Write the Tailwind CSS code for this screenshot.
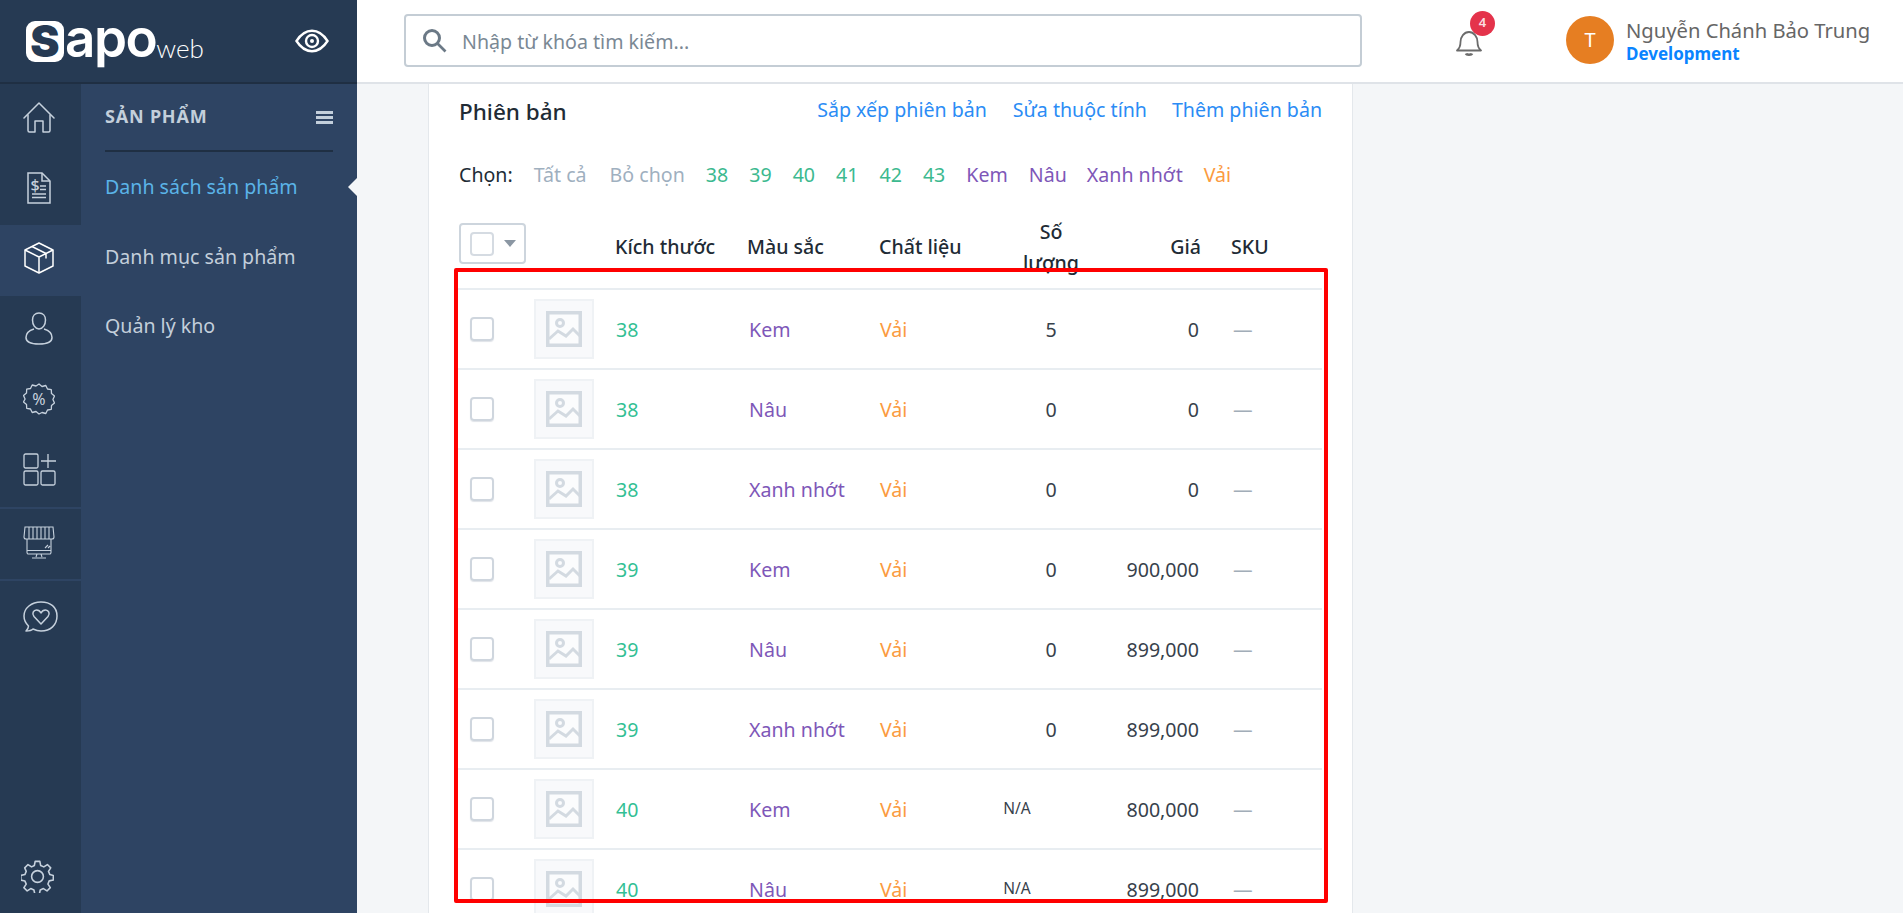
<!DOCTYPE html>
<html lang="vi">
  <head>
    <meta charset="UTF-8" />
    <title>Sapo web - Phiên bản</title>
    <script src="https://cdn.jsdelivr.net/npm/@tailwindcss/browser@4"></script>
  </head>
  <body class="h-screen overflow-hidden flex font-['Noto_Sans',sans-serif] text-[19.6px] text-[#212b35]">
    <!-- Left column -->
    <aside class="w-[357px] shrink-0 flex flex-col bg-[#2e4463]">
      <div class="h-[84px] shrink-0 bg-[#263a53] border-b-2 border-[#1f2f43] flex items-center pl-[26px] pr-[28px]">
        <div class="flex items-center h-[48px]">
          <span class="w-[38px] h-[41px] rounded-[9px] bg-white text-[#263a53] flex items-center justify-center font-['Inter',sans-serif] font-black text-[44px] leading-none">S</span>
          <span class="font-['Inter',sans-serif] font-semibold text-[53px] leading-none tracking-[-1.5px] text-white ml-[1px] -mt-[6px]">apo</span>
          <span class="font-['Lato',sans-serif] font-light text-[26px] leading-none text-white mt-[14px]">web</span>
        </div>
        <svg class="ml-auto" width="34" height="24" viewBox="0 0 34 24" fill="none" stroke="#fff" stroke-width="2.4">
          <path d="M1.5 12C6 5 11 1.8 17 1.8S28 5 32.5 12C28 19 23 22.2 17 22.2S6 19 1.5 12Z" />
          <circle cx="17" cy="12" r="6" />
          <circle cx="17" cy="12" r="2" fill="#fff" stroke="none" />
        </svg>
      </div>

      <div class="flex-1 flex min-h-0">
        <!-- Icon rail -->
        <nav class="w-[81px] shrink-0 bg-[#263a53] flex flex-col text-[#c6d1dd]">
          <a class="h-[70.5px] flex items-center justify-center pb-1 pr-[3px]">
            <svg width="32" height="31" viewBox="0 0 32 31" fill="none" stroke="currentColor" stroke-width="1.5" stroke-linejoin="round" stroke-linecap="round">
              <path d="M1 16 16 1l15 15" /><path d="M5 13v15.500a1.500 1.500 0 0 0 1.500 1.500H12V19h8v11h5.500a1.500 1.500 0 0 0 1.500-1.500V13" />
            </svg>
          </a>
          <a class="h-[70.5px] flex items-center justify-center pb-1 pr-[3px]">
            <svg width="24" height="32" viewBox="0 0 24 32" fill="none" stroke="currentColor" stroke-width="1.5">
              <path d="M1 1h14l8 8v22H1Z" /><path d="M15 1v8h8" />
              <path d="M5 22h14M5 25.500h14M13 14h6M13 17.500h6" />
              <text x="3.500" y="19" font-size="16" font-weight="500" fill="currentColor" stroke="none">$</text>
            </svg>
          </a>
          <a class="h-[70.5px] flex items-center justify-center pb-1 pr-[3px] bg-[#2e4463] text-white">
            <svg width="30" height="32" viewBox="0 0 30 32" fill="none" stroke="currentColor" stroke-width="1.500" stroke-linejoin="round">
              <path d="M15 1 29 8v16l-14 7-14-7V8Z" /><path d="M1 8l14 7 14-7M15 15v16M8 4.500l14 7v5" />
            </svg>
          </a>
          <a class="h-[70.5px] flex items-center justify-center pb-1 pr-[3px]">
            <svg width="28" height="33" viewBox="0 0 28 33" fill="none" stroke="currentColor" stroke-width="1.500">
              <path d="M14 1c-4 0-6.500 3-6.500 7 0 4.500 2.500 9 6.500 9s6.500-4.500 6.500-9c0-4-2.500-7-6.500-7Z" />
              <path d="M9 17c-5 1.500-8 4-8 8.500 0 4 4 6.500 13 6.500s13-2.500 13-6.500c0-4.500-3-7-8-8.500" />
            </svg>
          </a>
          <a class="h-[70.5px] flex items-center justify-center pb-1 pr-[3px]">
            <svg width="32" height="32" viewBox="0 0 32 32" fill="none" stroke="currentColor" stroke-width="1.300" stroke-linejoin="round">
              <path d="M16 1l3 2.500 3.800-1 1.700 3.500 3.800.7.200 3.900 3 2.400-1.600 3.500 1.600 3.500-3 2.400-.2 3.900-3.800.7-1.700 3.500-3.800-1L16 31l-3-2.500-3.800 1-1.700-3.500-3.800-.7-.2-3.900-3-2.400L2.100 16 .500 12.500l3-2.400.2-3.900 3.800-.7 1.700-3.500 3.800 1Z" />
              <text x="16" y="21.500" text-anchor="middle" font-size="16" font-weight="400" fill="currentColor" stroke="none">%</text>
            </svg>
          </a>
          <a class="h-[70.5px] flex items-center justify-center pb-1 pr-[3px]">
            <svg width="33" height="33" viewBox="0 0 33 33" fill="none" stroke="currentColor" stroke-width="1.300">
              <rect x="1" y="1" width="14" height="14" rx="1.500" /><rect x="1" y="18" width="14" height="14" rx="1.500" /><rect x="18" y="18" width="14" height="14" rx="1.500" />
              <path d="M25 1v14M18 8h15" />
            </svg>
          </a>
          <a class="h-[74px] border-y-2 border-[#2e4463] flex items-center justify-center pb-1 pr-[3px]">
            <svg width="32" height="33" viewBox="0 0 32 33" fill="none" stroke="currentColor" stroke-width="1.100">
              <path d="M2 1h28l1 10c0 1.500-1 2-2 2H3c-1 0-2-.500-2-2Z" />
              <path d="M6 1v12M10 1v12M14 1v12M18 1v12M22 1v12M26 1v12" />
              <path d="M4 13v13.500a1.500 1.500 0 0 0 1.500 1.500h21a1.500 1.500 0 0 0 1.500-1.500V13M4 24.500h24M14 28l-1 3M18 28l1 3M9 32h14M22 22l3-3M25 22l2-2" />
            </svg>
          </a>
          <a class="h-[70px] flex items-center justify-center pr-[1px] pt-[1px]">
            <svg width="35" height="31" viewBox="0 0 35 31" fill="none" stroke="currentColor" stroke-width="1.500" stroke-linejoin="round">
              <path d="M18 1C8.500 1 1 7 1 15c0 4 2 7.500 4.500 10 0 2-1.500 4-2.500 5 3 0 5.500-.500 7-2 2.500 1.200 5 2 8 2 9.500 0 16-6 16-15S27.500 1 18 1Z" />
              <path d="M18 23l-7-7.500c-2.500-3-.500-6.500 2.500-6.500 2 0 3.500 1 4.500 3 1-2 2.500-3 4.500-3 3 0 5 3.500 2.500 6.500Z" />
            </svg>
          </a>
          <a class="mt-auto h-[70px] flex items-center justify-center pr-[6px] pb-[3px]">
            <svg width="33" height="33" viewBox="0 0 24 24" fill="none" stroke="currentColor" stroke-width="1.150" stroke-linejoin="round">
              <circle cx="12" cy="12" r="4.300" />
              <path d="M10.300 1h3.400l.6 3 2.300 1 2.600-1.700 2.400 2.400L20 8.300l1 2.300 2.500.6v3.400l-3 .6-.9 2.300 1.700 2.600-2.400 2.400-2.600-1.700-2.300 1-.6 2.700h-3.400l-.6-2.700-2.300-1-2.600 1.700-2.400-2.400 1.700-2.600-1-2.300-2.900-.6v-3.400l2.900-.6 1-2.300L2.700 5.700l2.400-2.400 2.600 1.700 2-1Z" />
            </svg>
          </a>
        </nav>

        <!-- Section menu -->
        <div class="flex-1 relative">
          <div class="mx-[24px] h-[68px] border-b-2 border-[#1f2f43] flex items-center justify-between">
            <span class="font-bold text-[18px] tracking-[0.8px] text-[#c3cfdb] -mt-[2px]">SẢN PHẨM</span>
            <svg width="17" height="13" viewBox="0 0 17 13" fill="#c3cfdb"><rect width="17" height="3" /><rect y="5" width="17" height="3" /><rect y="10" width="17" height="3" /></svg>
          </div>
          <ul class="text-[#c3cfdb]">
            <li class="h-[69.500px] flex items-center pl-[24px] text-[#5bb4e8]">Danh sách sản phẩm</li>
            <li class="h-[69.500px] flex items-center pl-[24px]">Danh mục sản phẩm</li>
            <li class="h-[69.500px] flex items-center pl-[24px]">Quản lý kho</li>
          </ul>
          <span class="absolute right-0 top-[94px] border-y-[9px] border-r-[9px] border-y-transparent border-r-[#f4f6f8]"></span>
        </div>
      </div>
    </aside>

    <!-- Right column -->
    <div class="flex-1 flex flex-col min-w-0">
      <header class="h-[84px] shrink-0 bg-white border-b-2 border-[#dfe3e8] flex items-center pl-[47px]">
        <div class="w-[958px] h-[53px] -mt-[2px] rounded-[4px] border-2 border-[#c4cdd5] flex items-center pl-[16px] gap-[15px] text-[#7a8894]">
          <svg width="25" height="25" viewBox="0 0 25 25" fill="none" stroke="#6b7986" stroke-width="3"><circle cx="10" cy="10" r="7.500" /><path d="m15.500 15.500 8 8" stroke-width="2.600" /></svg>
          <span class="pt-[4px]">Nhập từ khóa tìm kiếm...</span>
        </div>
        <div class="relative ml-[94px] w-[26px] h-[30px] mt-[3px]">
          <svg width="26" height="28" viewBox="0 0 26 28" fill="none" stroke="#6b6b6b" stroke-width="1.800" stroke-linejoin="round">
            <path d="M1 22.500c2.500-2 3.500-4 3.500-8.500 0-5 3.500-10 8.500-10s8.500 5 8.500 10c0 4.500 1 6.500 3.500 8.500Z" /><path d="M10 25.500c.5 1.500 5.500 1.500 6 0" stroke-width="2.500" />
          </svg>
          <span class="absolute -top-[17px] left-[14px] w-[25px] h-[25px] rounded-full bg-[#e4334b] text-[#fbdde1] text-[13px] font-semibold flex items-center justify-center">4</span>
        </div>
        <div class="ml-[84px] w-[48px] h-[48px] rounded-full bg-[#e67e22] text-white text-[20px] flex items-center justify-center -mt-[2px]">T</div>
        <div class="ml-[12px] flex flex-col -mt-[1px]">
          <span class="text-[#666] text-[20.2px] leading-[27px] whitespace-nowrap">Nguyễn Chánh Bảo Trung</span>
          <span class="text-[#0a84ff] text-[17px] font-bold leading-[20px]">Development</span>
        </div>
      </header>

      <main class="flex-1 min-h-0 overflow-hidden bg-[#f4f6f8] pl-[71px] relative">
        <section class="w-[925px] h-full bg-white border-x border-[#e4e8ec] pl-[29px] pr-[30px]">
          <div class="h-[56px] pl-[1px] flex items-center justify-between">
            <h2 class="text-[22.5px] font-medium">Phiên bản</h2>
            <div class="flex gap-[25px] text-[#2b8cf5] -mt-[4px]">
              <a>Sắp xếp phiên bản</a>
              <a class="ml-[1px]">Sửa thuộc tính</a>
              <a>Thêm phiên bản</a>
            </div>
          </div>
          <div class="h-[70px] pl-[1px] flex items-center gap-[21px] whitespace-nowrap">
            <span>Chọn:</span>
            <span class="text-[#9fb0bf]">Tất cả</span>
            <span class="ml-[2px] text-[#9fb0bf]">Bỏ chọn</span>
            <span class="text-[#3cb98f]">38</span>
            <span class="text-[#3cb98f]">39</span>
            <span class="text-[#3cb98f]">40</span>
            <span class="text-[#3cb98f]">41</span>
            <span class="text-[#3cb98f]">42</span>
            <span class="text-[#3cb98f]">43</span>
            <span class="text-[#7e57b8]">Kem</span>
            <span class="text-[#7e57b8]">Nâu</span>
            <span class="-ml-[1px] text-[#7e57b8]">Xanh nhớt</span>
            <span class="text-[#fb9b3f]">Vải</span>
          </div>
          <!-- Table head -->
          <div class="h-[78px] pb-[5px] grid grid-cols-[76px_81px_132px_132px_121px_102px_98px_1fr] items-center font-medium">
            <div class="self-start mt-[13px] ml-[1px] w-[67px] h-[41px] rounded-[4px] border-2 border-[#cdd5dd] flex items-center pl-[9px] gap-[10px]">
              <span class="w-[24px] h-[24px] rounded-[4px] border-2 border-[#d5dbe2]"></span>
              <span class="border-x-[6px] border-t-[7px] border-x-transparent border-t-[#8b97a3]"></span>
            </div>
            <div></div>
            <div class="whitespace-nowrap">Kích thước</div>
            <div>Màu sắc</div>
            <div class="whitespace-nowrap">Chất liệu</div>
            <div class="text-center leading-[31px] px-[20px]">Số lượng</div>
            <div class="text-right -mr-[1px]">Giá</div>
            <div class="pl-[31px]">SKU</div>
          </div>
          <div id="rows"></div>
        </section>
        <!-- Red annotation frame -->
        <div class="absolute left-[97px] top-[184px] w-[874px] h-[635px] border-4 border-[#ff0000] rounded-[2px]"></div>
      </main>
    </div>

    <script>
      const rows = [
        ["38", "Kem", "5", "0"],
        ["38", "Nâu", "0", "0"],
        ["38", "Xanh nhớt", "0", "0"],
        ["39", "Kem", "0", "900,000"],
        ["39", "Nâu", "0", "899,000"],
        ["39", "Xanh nhớt", "0", "899,000"],
        ["40", "Kem", "N/A", "800,000"],
        ["40", "Nâu", "N/A", "899,000"],
      ];

      document.getElementById("rows").innerHTML = rows
        .map(
          ([size, color, qty, price]) => `
          <div class="h-[80px] border-t-2 border-[#e8edf1] grid grid-cols-[76px_81px_132px_132px_121px_102px_98px_1fr] items-center text-[#37414b]">
            <div class="pl-[12px]"><span class="block w-[24px] h-[24px] rounded-[4px] border-2 border-[#cfd6de] shadow-[0_1px_1px_#dfe3e8]"></span></div>
            <div class="w-[60px] h-[60px] bg-[#f8f9fb] border-2 border-[#eff2f5] flex items-center justify-center">
              <svg width="36" height="36" viewBox="0 0 36 36" fill="none" stroke="#d3dae1" stroke-width="3.500">
                <rect x="1.750" y="1.750" width="32.500" height="32.500" fill="#fbfcfd" />
                <circle cx="14" cy="12" r="3.500" stroke-width="3" />
                <path d="M3 28l9-8 8 5 7-7 7 7" stroke-width="3" />
              </svg>
            </div>
            <div class="pl-[1px] pt-[2px] text-[#33bf94]">${size}</div>
            <div class="pl-[2px] pt-[2px] text-[#7e57b8]">${color}</div>
            <div class="pl-[1px] pt-[2px] text-[#fb9b3f]">Vải</div>
            <div class="text-center ${qty === "N/A" ? "text-[15.5px] pr-[68px] pb-[1px]" : "pt-[2px]"}">${qty}</div>
            <div class="text-right pr-[1px] pt-[2px]">${price}</div>
            <div class="pl-[33px] pt-[2px] text-[#a2adb8]">—</div>
          </div>`
        )
        .join("");
    </script>
  </body>
</html>
